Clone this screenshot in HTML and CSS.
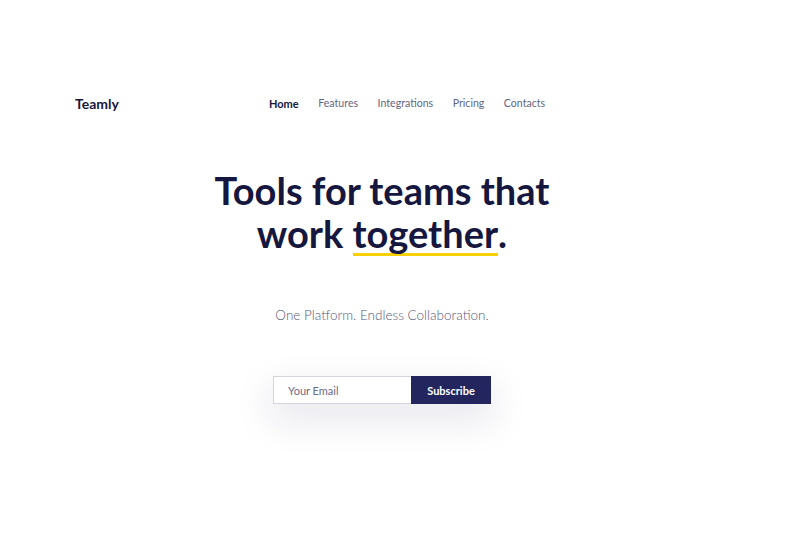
FILE: index.html
```html
<!DOCTYPE html>
<html>
<head>
<meta charset="utf-8">
<link rel="stylesheet" href="styles.css">
</head>
<body>
<div class="page">
  <header class="header">
    <div class="logo">Teamly</div>
    <nav class="nav">
      <a class="nav-link active">Home</a>
      <a class="nav-link">Features</a>
      <a class="nav-link">Integrations</a>
      <a class="nav-link">Pricing</a>
      <a class="nav-link">Contacts</a>
    </nav>
  </header>
  <main class="hero">
    <h1 class="title">Tools for teams that<br>work <span class="mark">together</span>.</h1>
    <p class="subtitle">One Platform. Endless Collaboration.</p>
    <form class="signup">
      <input class="email" type="text" placeholder="Your Email">
      <button class="btn" type="button">Subscribe</button>
    </form>
  </main>
</div>
</body>
</html>
```
FILE: styles.css
```css
* { box-sizing: border-box; }
html, body { margin: 0; padding: 0; background: #fff; }
body { font-family: Lato, "Open Sans", sans-serif; color: #15173f; min-height: 533px; }
.page { width: 764px; padding-top: 93px; padding-bottom: 120px; }
.header { display: flex; align-items: center; height: 20px; padding-left: 75px; }
.logo { font-weight: 700; font-size: 14px; color: #15173f; width: 194px; }
.nav { display: flex; gap: 19.5px; }
.nav-link { font-size: 10.6px; color: #64657e; }
.nav-link.active { font-weight: 700; font-size: 11px; color: #15173f; }
.hero { display: flex; flex-direction: column; align-items: center; }
.title { margin: 56px 0 0; font-size: 38px; line-height: 43px; font-weight: 700; text-align: center; color: #15173f; }
.mark { border-bottom: 3px solid #f8d008; display: inline-block; line-height: 39px; }
.subtitle { margin: 51px 0 0; font-size: 13.5px; font-weight: 300; color: #55577a; }
.signup { margin-top: 53px; display: flex; box-shadow: 0 14px 36px 4px rgba(30, 32, 80, 0.1); }
.email { width: 138px; height: 28px; border: 1px solid #d4d5de; border-right: none; padding: 0 14px; font-family: inherit; font-size: 11px; color: #5d5f7e; outline: none; }
.email::placeholder { color: #6a6c88; }
.btn { width: 80px; height: 28px; border: none; background: #23265e; color: #fff; font-family: inherit; font-weight: 700; font-size: 11px; }
```
